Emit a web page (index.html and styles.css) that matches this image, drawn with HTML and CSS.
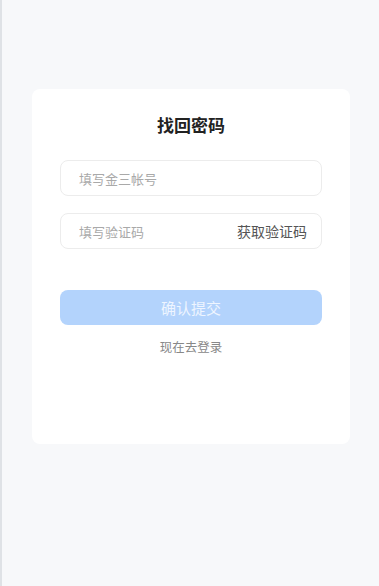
FILE: index.html
```html
<!DOCTYPE html>
<html lang="zh-CN">
<head>
    <meta charset="utf-8">
    <link rel="stylesheet" href="styles.css">
</head>
<body>
<div class="page">
    <div class="card">
        <h2 class="title">找回密码</h2>
        <div class="field">
            <input type="text" placeholder="填写金三帐号">
        </div>
        <div class="field">
            <input type="text" placeholder="填写验证码">
            <span class="get-code">获取验证码</span>
        </div>
        <button class="submit">确认提交</button>
        <a class="to-login" href="#">现在去登录</a>
    </div>
</div>
</body>
</html>
```

FILE: styles.css
```css
* {
    margin: 0;
    padding: 0;
    box-sizing: border-box;
}
body {
    font-family: "Noto Sans CJK SC", "Noto Sans", sans-serif;
    background-color: #f7f8fa;
}
.page {
    min-height: 586px;
    padding: 89px 29px 0 30px;
    border-left: 2px solid #dfe2e6;
}
.card {
    height: 355px;
    background-color: #fff;
    border-radius: 8px;
    padding: 24px 28px 0;
    display: flex;
    flex-direction: column;
    align-items: stretch;
}
.title {
    font-size: 17px;
    font-weight: bold;
    color: #222;
    text-align: center;
    line-height: 24px;
    margin-bottom: 23px;
}
.field {
    height: 36px;
    border: 1px solid #ececec;
    border-radius: 8px;
    display: flex;
    align-items: center;
    padding: 0 14px 0 18px;
    margin-bottom: 17px;
}
.field input {
    flex: 1;
    min-width: 0;
    border: none;
    outline: none;
    font-family: inherit;
    font-size: 13px;
    color: #333;
    background: transparent;
}
.field input::placeholder {
    color: #a9a9a9;
}
.get-code {
    font-size: 14px;
    color: #555;
}
.submit {
    margin-top: 24px;
    height: 35px;
    border: none;
    border-radius: 8px;
    background-color: #b3d3fc;
    color: #eef5ff;
    font-family: inherit;
    font-size: 15px;
}
.to-login {
    margin-top: 12px;
    text-align: center;
    font-size: 12.5px;
    color: #888;
    text-decoration: none;
}
```
